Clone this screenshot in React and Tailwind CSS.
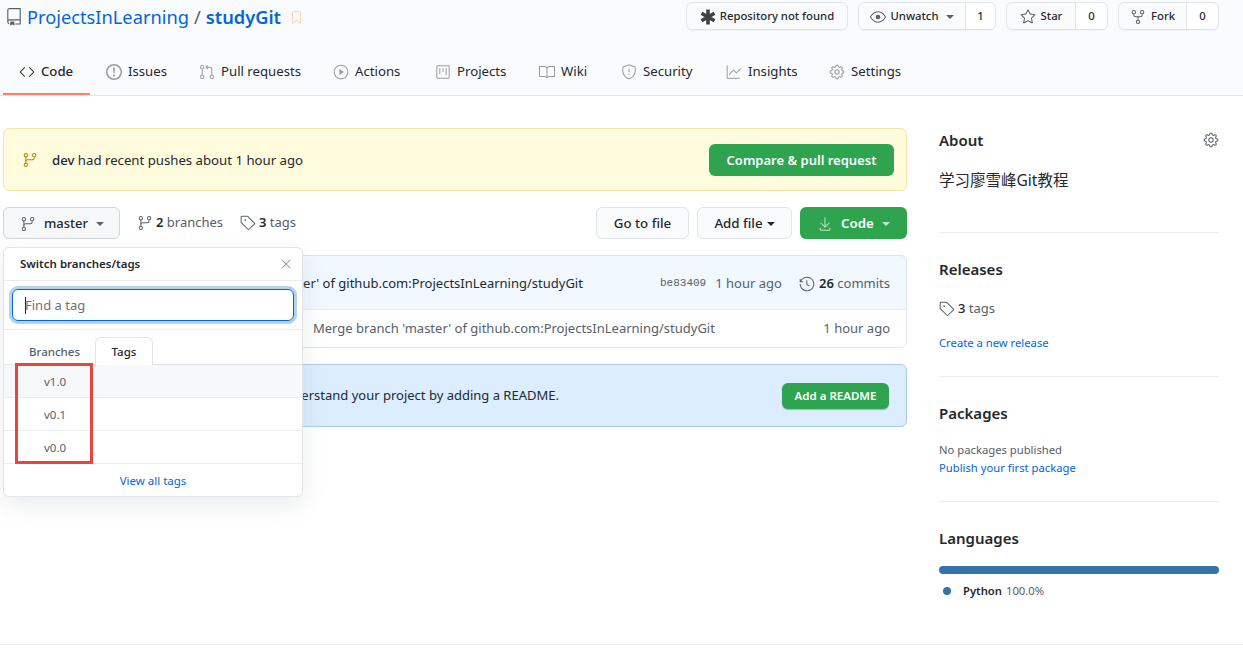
import {
  GoRepo, GoCode, GoGitPullRequest, GoPlay, GoProject, GoBook, GoShield, GoGraph, GoGear,
  GoGitBranch, GoTag, GoEye, GoStar, GoRepoForked, GoDownload, GoHistory, GoX, GoBookmark,
} from 'react-icons/go'

const FONT = "font-['Noto_Sans','Noto_Sans_CJK_SC',sans-serif]"

// the old octicon with an exclamation mark, the package only has the dotted one
const IssueIcon = ({ className }) => (
  <svg className={className} width="1em" height="1em" viewBox="0 0 16 16" fill="currentColor">
    <path fillRule="evenodd" d="M8 1.5a6.5 6.5 0 100 13 6.5 6.5 0 000-13zM0 8a8 8 0 1116 0A8 8 0 010 8z" />
    <path d="M7.1 3.6h1.8l-.3 5.6H7.4zM8 10.4a1.1 1.1 0 110 2.2 1.1 1.1 0 010-2.2z" />
  </svg>
)

const tabs = [
  { label: 'Code', Icon: GoCode, w: 'w-[87px]', active: true },
  { label: 'Issues', Icon: IssueIcon, w: 'w-[93px]' },
  { label: 'Pull requests', Icon: GoGitPullRequest, w: 'w-[134px]' },
  { label: 'Actions', Icon: GoPlay, w: 'w-[102px]' },
  { label: 'Projects', Icon: GoProject, w: 'w-[104px]' },
  { label: 'Wiki', Icon: GoBook, w: 'w-[82px]' },
  { label: 'Security', Icon: GoShield, w: 'w-[105px]' },
  { label: 'Insights', Icon: GoGraph, w: 'w-[103px]' },
  { label: 'Settings', Icon: GoGear, w: 'w-[110px]' },
]

const Caret = ({ className = '' }) => (
  <span className={`inline-block w-0 h-0 border-x-[4px] border-x-transparent border-t-[4px] ${className}`} />
)

const CountButton = ({ Icon, label, count, w, cw, caret }) => (
  <div className="flex h-[28px] rounded-md border border-[#e1e4e8] shadow-[0_1px_0_rgba(27,31,35,0.04)] text-[11.3px] font-medium text-[#24292e]">
    <div className={`flex items-center justify-center gap-[5px] bg-[#fafbfc] rounded-l-md pt-px ${w}`}>
      <Icon className="text-[#586069] text-[16px]" />
      <span>{label}</span>
      {caret && <Caret className="border-t-[#586069] ml-[3px]" />}
    </div>
    <div className={`flex items-center justify-center bg-white rounded-r-md border-l border-[#e1e4e8] pt-px ${cw}`}>{count}</div>
  </div>
)

const SideSection = ({ title, className, children }) => (
  <div className={`border-b border-[#eaecef] ${className}`}>
    <h2 className="text-[15px] font-semibold text-[#24292e] leading-[24px]">{title}</h2>
    {children}
  </div>
)

const Dropdown = () => (
  <div className="absolute left-[3px] top-[247px] w-[300px] h-[250px] bg-white border border-[#e1e4e8] rounded-md shadow-[0_8px_24px_rgba(149,157,165,0.2)] z-10">
    <div className="h-[33px] flex items-center justify-between pl-[16px] pr-[8px] border-b border-[#eaecef]">
      <span className="text-[11.5px] font-semibold text-[#24292e]">Switch branches/tags</span>
      <GoX className="text-[#959da5] text-[16px]" />
    </div>
    <div className="h-[49px] px-[8px] flex items-center border-b border-[#eaecef]">
      <div className="w-full h-[32px] rounded-md border border-[#0366d6] shadow-[0_0_0_3px_rgba(3,102,214,0.3)] flex items-center pl-[12px] pt-px text-[13px] text-[#6a737d]">
        <span className="w-px h-[17px] bg-[#24292e] -mr-px" />
        <span>Find a tag</span>
      </div>
    </div>
    <div className="h-[35px] flex items-end pl-[8px] border-b border-[#e1e4e8]">
      <div className="w-[83px] h-[27px] flex items-center justify-center pl-[2px] pt-[3px] text-[11.5px] font-medium text-[#586069]">Branches</div>
      <div className="w-[58px] h-[28px] -mb-px bg-white border border-b-0 border-[#e1e4e8] rounded-t-md flex items-center justify-center pt-[1px] text-[11.5px] font-medium text-[#24292e]">Tags</div>
    </div>
    {['v1.0', 'v0.1', 'v0.0'].map((tag, i) => (
      <div key={tag} className={`h-[33px] flex items-center pl-[40px] pt-[1px] text-[11.5px] text-[#586069] border-b border-[#eaecef] ${i === 0 ? 'bg-[#f6f8fa]' : ''}`}>{tag}</div>
    ))}
    <div className="h-[32px] flex items-center justify-center pt-[2px] text-[11.5px] text-[#0366d6]">View all tags</div>
  </div>
)

export default function App() {
  return (
    <div className={`relative w-[1243px] h-[648px] overflow-hidden bg-white text-[#24292e] text-[13px] ${FONT}`}>
      <div className="h-[96px] bg-[#fafbfc] border-b border-[#e1e4e8] flex flex-col">
        <div className="h-[36px] flex items-start justify-between pl-[5px] pr-[24px]">
          <div className="flex items-center h-[34px] text-[18.25px] text-[#0366d6]">
            <GoRepo className="text-[#586069] text-[18px] mr-[4px]" />
            <span>ProjectsInLearning</span>
            <span className="text-[#586069] mx-[5px]">/</span>
            <span className="font-semibold">studyGit</span>
            <GoBookmark className="ml-[8px] text-[#fbd2ae] text-[15px]" />
          </div>
          <div className="flex gap-[10px] pt-[2px]">
            <div className="flex items-center justify-center gap-[4px] w-[162px] h-[28px] pt-px bg-[#fafbfc] rounded-md border border-[#e1e4e8] shadow-[0_1px_0_rgba(27,31,35,0.04)] text-[11.3px] font-medium">
              <svg width="16" height="16" viewBox="0 0 16 16" stroke="#3f4347" strokeWidth="3.6">
                <path d="M8 0.5v15M1.5 4.2l13 7.6M14.5 4.2l-13 7.6" />
              </svg>
              <span>Repository not found</span>
            </div>
            <CountButton Icon={GoEye} label="Unwatch" count="1" w="w-[106px]" cw="w-[30px]" caret />
            <CountButton Icon={GoStar} label="Star" count="0" w="w-[68px]" cw="w-[32px]" />
            <CountButton Icon={GoRepoForked} label="Fork" count="0" w="w-[67px]" cw="w-[32px]" />
          </div>
        </div>
        <div className="flex-1 flex items-stretch pl-[3px] text-[13.2px]">
          {tabs.map(({ label, Icon, w, active }) => (
            <div key={label} className={`${w} h-[60px] pl-[16px] flex items-center gap-[6px] pt-[15px] border-b-[2px] ${active ? 'border-[#f9826c] font-medium' : 'border-transparent'}`}>
              <Icon className={`text-[16px] shrink-0 ${active ? 'text-[#24292e]' : 'text-[#959da5]'}`} />
              <span>{label}</span>
            </div>
          ))}
        </div>
      </div>

      <div className="flex pt-[32px] pl-[3px]">
        <div className="w-[904px]">
          <div className="h-[63px] bg-[#fffbdd] border border-[#f0e6a8] rounded-md flex items-center justify-between pl-[18px] pr-[12px]">
            <div className="flex items-center gap-[14px] pt-[2px] text-[13.2px]">
              <GoGitBranch className="text-[#b08800] text-[16px]" />
              <span><span className="font-medium">dev</span> had recent pushes about 1 hour ago</span>
            </div>
            <div className="w-[185px] h-[32px] pt-[2px] bg-[#2ea44f] rounded-md flex items-center justify-center text-white font-semibold">Compare &amp; pull request</div>
          </div>

          <div className="mt-[16px] h-[32px] flex items-center justify-between">
            <div className="flex items-center">
              <div className="w-[117px] h-[32px] pt-px bg-[#f6f8fa] border border-[#d1d5da] rounded-md flex items-center pl-[16px] font-medium">
                <GoGitBranch className="text-[#586069] text-[16px]" />
                <span className="ml-[8px]">master</span>
                <Caret className="border-t-[#586069] ml-[8px]" />
              </div>
              <div className="ml-[17px] flex items-center gap-[3px] w-[103px]">
                <GoGitBranch className="text-[#586069] text-[16px]" />
                <span><span className="font-semibold">2</span> <span className="text-[#586069]">branches</span></span>
              </div>
              <div className="flex items-center gap-[3px]">
                <GoTag className="text-[#586069] text-[16px]" />
                <span><span className="font-semibold">3</span> <span className="text-[#586069]">tags</span></span>
              </div>
            </div>
            <div className="flex items-center gap-[8px] text-[13.3px]">
              <div className="w-[93px] h-[32px] pt-px bg-[#fafbfc] border border-[#e1e4e8] rounded-md flex items-center justify-center font-medium">Go to file</div>
              <div className="w-[95px] h-[32px] pt-px bg-[#fafbfc] border border-[#e1e4e8] rounded-md flex items-center justify-center gap-[4px] font-medium">
                <span>Add file</span>
                <Caret className="border-t-[#24292e]" />
              </div>
              <div className="w-[107px] h-[32px] pt-px bg-[#2ea44f] rounded-md flex items-center justify-center gap-[8px] text-white font-semibold">
                <GoDownload className="text-[#c6e5cf] text-[16px]" />
                <span>Code</span>
                <Caret className="border-t-[#c6e5cf]" />
              </div>
            </div>
          </div>

          <div className="mt-[16px] rounded-md border border-[#e1e4e8] overflow-hidden">
            <div className="h-[54px] pt-[2px] -mx-px -mt-px border border-[#c8e1ff] border-b-0 rounded-t-md bg-[#f1f8ff] flex items-center pr-[16px]">
              <span className="ml-[177px] w-[479px] whitespace-nowrap">Merge branch 'master' of github.com:ProjectsInLearning/studyGit</span>
              <span className="font-['Liberation_Mono',monospace] text-[11px] text-[#586069] whitespace-nowrap">be83409</span>
              <span className="ml-[9px] text-[#586069] whitespace-nowrap">1 hour ago</span>
              <span className="ml-auto flex items-center gap-[4px] whitespace-nowrap">
                <GoHistory className="text-[#586069] text-[16px]" />
                <span><span className="font-semibold">26</span> <span className="text-[#586069]">commits</span></span>
              </span>
            </div>
            <div className="h-[38px] pt-px border-t border-[#eaecef] flex items-center justify-between pl-[309px] pr-[16px] text-[#586069]">
              <span className="whitespace-nowrap">Merge branch 'master' of github.com:ProjectsInLearning/studyGit</span>
              <span>1 hour ago</span>
            </div>
          </div>

          <div className="mt-[16px] h-[63px] bg-[#dbedff] border border-[#a8cbec] rounded-md flex items-center justify-between pr-[17px]">
            <div className="w-[555px] pt-px flex justify-end whitespace-nowrap">in this repository understand your project by adding a README.</div>
            <div className="w-[107px] h-[26px] bg-[#2ea44f] rounded-md shadow-[0_1px_1px_rgba(27,31,35,0.3)] flex items-center justify-center text-white text-[11.5px] font-semibold">Add a README</div>
          </div>
        </div>

        <div className="ml-[32px] w-[280px]">
          <SideSection title="About" className="h-[105px]">
            <div className="flex justify-end -mt-[20px]">
              <GoGear className="text-[#586069] text-[16px]" />
            </div>
            <p className="mt-[20px] text-[15.5px] leading-[24px]">学习廖雪峰Git教程</p>
          </SideSection>
          <SideSection title="Releases" className="h-[144px] pt-[24px]">
            <div className="mt-[18px] flex items-center gap-[3px] h-[20px]">
              <GoTag className="text-[#586069] text-[16px]" />
              <span><span className="font-medium">3</span> <span className="text-[#586069]">tags</span></span>
            </div>
            <div className="mt-[16px] text-[11.25px] text-[#0366d6]">Create a new release</div>
          </SideSection>
          <SideSection title="Packages" className="h-[125px] pt-[24px]">
            <div className="mt-[16px] text-[11.25px] leading-[18px] text-[#586069]">No packages published</div>
            <div className="text-[11.25px] leading-[18px] text-[#0366d6]">Publish your first package</div>
          </SideSection>
          <div className="pt-[24px]">
            <h2 className="text-[15px] font-semibold leading-[24px]">Languages</h2>
            <div className="mt-[16px] h-[8px] rounded-full bg-[#3572A5]" />
            <div className="mt-[8px] flex items-center text-[11.25px] leading-[18px]">
              <span className="w-[8px] h-[8px] ml-[4px] rounded-full bg-[#3572A5]" />
              <span className="ml-[12px] font-semibold">Python</span>
              <span className="ml-[4px] text-[#586069]">100.0%</span>
            </div>
          </div>
        </div>
      </div>

      <Dropdown />

      <div className="absolute left-[15px] top-[363px] w-[78px] h-[101px] border-[3px] border-[#e8453c] z-20" />
      <div className="absolute left-0 right-0 top-[644px] border-t border-[#eaecef]" />
    </div>
  )
}
